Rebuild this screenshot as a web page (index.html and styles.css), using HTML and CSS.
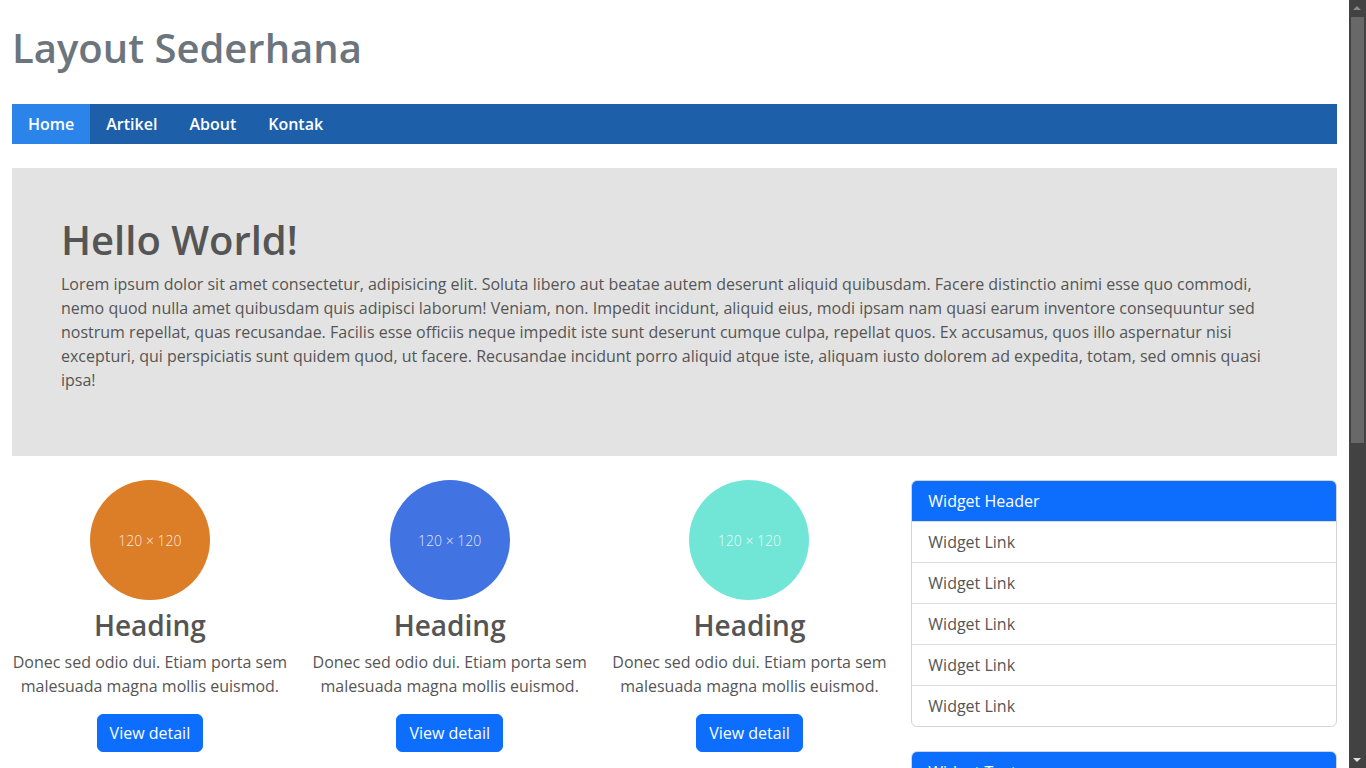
FILE: index.html
```html
<!DOCTYPE html>
<html lang="id">
<head>
<meta charset="utf-8">
<title>Layout Sederhana</title>
<link rel="stylesheet" href="styles.css">
</head>
<body>
<div class="container">
  <header class="site-header">
    <h1 class="site-title">Layout Sederhana</h1>
  </header>
  <nav class="navbar">
    <a class="nav-link active" href="#">Home</a>
    <a class="nav-link" href="#">Artikel</a>
    <a class="nav-link" href="#">About</a>
    <a class="nav-link" href="#">Kontak</a>
  </nav>
  <section class="jumbotron">
    <h1 class="hero-title">Hello World!</h1>
    <p class="hero-text">Lorem ipsum dolor sit amet consectetur, adipisicing elit. Soluta libero aut beatae autem deserunt aliquid quibusdam. Facere distinctio animi esse quo commodi, nemo quod nulla amet quibusdam quis adipisci laborum! Veniam, non. Impedit incidunt, aliquid eius, modi ipsam nam quasi earum inventore consequuntur sed nostrum repellat, quas recusandae. Facilis esse officiis neque impedit iste sunt deserunt cumque culpa, repellat quos. Ex accusamus, quos illo aspernatur nisi excepturi, qui perspiciatis sunt quidem quod, ut facere. Recusandae incidunt porro aliquid atque iste, aliquam iusto dolorem ad expedita, totam, sed omnis quasi ipsa!</p>
  </section>
  <div class="main-row">
    <div class="content">
      <div class="feature">
        <div class="thumb-wrap"><span class="thumb orange">120 × 120</span></div>
        <h2 class="feature-title">Heading</h2>
        <p class="feature-text">Donec sed odio dui. Etiam porta sem malesuada magna mollis euismod.</p>
        <p class="feature-action"><a class="btn" href="#">View detail</a></p>
      </div>
      <div class="feature">
        <div class="thumb-wrap"><span class="thumb blue">120 × 120</span></div>
        <h2 class="feature-title">Heading</h2>
        <p class="feature-text">Donec sed odio dui. Etiam porta sem malesuada magna mollis euismod.</p>
        <p class="feature-action"><a class="btn" href="#">View detail</a></p>
      </div>
      <div class="feature">
        <div class="thumb-wrap"><span class="thumb teal">120 × 120</span></div>
        <h2 class="feature-title">Heading</h2>
        <p class="feature-text">Donec sed odio dui. Etiam porta sem malesuada magna mollis euismod.</p>
        <p class="feature-action"><a class="btn" href="#">View detail</a></p>
      </div>
    </div>
    <aside class="sidebar">
      <div class="card">
        <div class="card-header">Widget Header</div>
        <ul class="list">
          <li class="list-item"><a href="#">Widget Link</a></li>
          <li class="list-item"><a href="#">Widget Link</a></li>
          <li class="list-item"><a href="#">Widget Link</a></li>
          <li class="list-item"><a href="#">Widget Link</a></li>
          <li class="list-item"><a href="#">Widget Link</a></li>
        </ul>
      </div>
      <div class="card">
        <div class="card-header">Widget Text</div>
        <div class="card-body">Lorem ipsum dolor sit amet consectetur adipisicing elit. Fugit, laborum. Quia, voluptatibus cumque.</div>
      </div>
    </aside>
  </div>
  <footer class="footer">Copyright &copy; 2023</footer>
</div>
<div class="scrollbar" aria-hidden="true">
  <span class="scroll-arrow up"></span>
  <span class="scroll-thumb"></span>
  <span class="scroll-arrow down"></span>
</div>
</body>
</html>
```

FILE: styles.css
```css
* {
  box-sizing: border-box;
}
body {
  margin: 0;
  padding-right: 17px;
  font-family: "Open Sans", "Noto Sans", sans-serif;
  font-size: 16px;
  line-height: 1.5;
  color: #555555;
  background: #ffffff;
}
a {
  text-decoration: none;
}
.container {
  padding: 0 12px;
}
.site-header {
  padding-top: 24px;
  padding-bottom: 8px;
  margin-bottom: 24px;
}
.site-title {
  margin: 0;
  font-size: 40px;
  line-height: 48px;
  font-weight: 600;
  color: #6c757d;
}
.navbar {
  display: flex;
  background: #1e5faa;
  height: 40px;
}
.nav-link {
  display: block;
  padding: 8px 16px;
  color: #ffffff;
  font-weight: 600;
  line-height: 24px;
}
.nav-link.active {
  background: #2b84e9;
}
.jumbotron {
  margin-top: 24px;
  background: #e3e3e3;
  padding: 48px 48px 48px 49px;
}
.hero-title {
  margin: 0 0 8px;
  font-size: 40px;
  line-height: 48px;
  font-weight: 600;
  color: #555555;
}
.hero-text {
  margin: 0 0 16px;
}
.main-row {
  display: flex;
  gap: 24px;
  margin-top: 24px;
}
.content {
  flex: 0 0 calc((100% + 24px) * 8 / 12 - 24px);
  display: flex;
  gap: 24px;
}
.feature {
  flex: 1 1 0;
  text-align: center;
}
.thumb-wrap {
  height: 128px;
}
.thumb {
  display: inline-flex;
  align-items: center;
  justify-content: center;
  width: 120px;
  height: 120px;
  border-radius: 50%;
  color: rgba(255, 255, 255, 0.85);
  font-size: 14px;
  font-weight: 300;
}
.thumb.orange { background: #dc7d28; }
.thumb.blue { background: #4273e3; }
.thumb.teal { background: #72e6d6; }
.feature-title {
  margin: 0 0 8px;
  font-size: 28px;
  line-height: 34px;
  font-weight: 600;
  color: #555555;
}
.feature-text {
  margin: 0 0 16px;
}
.feature-action {
  margin: 0 0 16px;
}
.btn {
  display: inline-block;
  padding: 6px 12px;
  line-height: 24px;
  background: #0d6efd;
  color: #ffffff;
  border-radius: 6px;
  border: 1px solid #0d6efd;
}
.sidebar {
  flex: 1 1 0;
  display: flex;
  flex-direction: column;
  gap: 24px;
}
.card {
  border: 1px solid #d4d4d4;
  border-radius: 6px;
  overflow: hidden;
}
.card-header {
  background: #0d6efd;
  color: #ffffff;
  padding: 8px 16px;
  line-height: 24px;
}
.list {
  list-style: none;
  margin: 0;
  padding: 0;
}
.list-item {
  border-top: 1px solid #dcdcdc;
  padding: 8px 16px;
  line-height: 24px;
}
.list-item a {
  color: #555555;
}
.card-body {
  padding: 16px;
}
.footer {
  margin-top: 24px;
  padding: 16px 0 24px;
  text-align: center;
}
.scrollbar {
  position: fixed;
  top: 0;
  right: 0;
  bottom: 0;
  width: 17px;
  background: #424242;
}
.scroll-thumb {
  position: absolute;
  top: 17px;
  left: 2px;
  right: 2px;
  height: 426px;
  background: #686868;
}
.scroll-arrow {
  position: absolute;
  left: 4px;
  width: 0;
  height: 0;
  border-left: 4.5px solid transparent;
  border-right: 4.5px solid transparent;
}
.scroll-arrow.up {
  top: 6px;
  border-bottom: 4px solid #8a8a8a;
}
.scroll-arrow.down {
  bottom: 6px;
  border-top: 4px solid #e0e0e0;
}
```
